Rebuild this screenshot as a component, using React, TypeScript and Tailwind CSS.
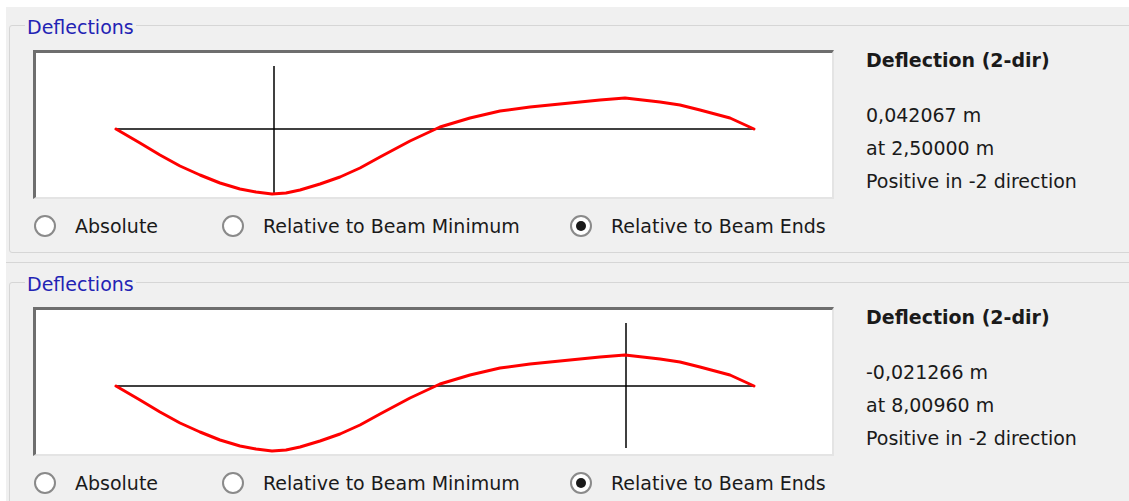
const font = { fontFamily: '"DejaVu Sans", Verdana, sans-serif' };

// deflected shape, in plot coordinates (px inside the sunken frame)
const curve =
  "80,76 104,90 124,102 144,113 164,122 184,130 204,136 220,139 236,141 250,140 264,137 284,131 304,124 324,115 344,104 374,88 404,74 434,65 464,58 494,54 524,51 564,47 589,45 624,49 644,52 664,57 694,65 718,76";

type Panel = {
  marker: number;
  markerTop: number;
  markerBottom: number;
  value: string;
  at: string;
};

const panels: Panel[] = [
  { marker: 238, markerTop: 13, markerBottom: 142, value: "0,042067 m", at: "at 2,50000 m" },
  { marker: 590, markerTop: 13, markerBottom: 138, value: "-0,021266 m", at: "at 8,00960 m" },
];

function Radio({ label, checked, width }: { label: string; checked?: boolean; width: string }) {
  return (
    <div className={`flex items-center gap-[19px] ${width}`}>
      <span className="flex h-[22px] w-[22px] items-center justify-center rounded-full border-2 border-[#8a8a8a] bg-white">
        {checked && <span className="h-[10px] w-[10px] rounded-full bg-[#1a1a1a]" />}
      </span>
      <span className="text-[19px] leading-[22px] text-[#1a1a1a]">{label}</span>
    </div>
  );
}

function DeflectionGroup({ p }: { p: Panel }) {
  return (
    <fieldset className="ml-[3px] w-[1140px] rounded-[3px] border border-[#d6d6d6] pb-[15px]">
      <legend className="ml-[15px] px-[2px] text-[19px] leading-[16px] text-[#2323b4]">
        <span className="relative top-[2px]">Deflections</span>
      </legend>
      <div className="mt-[17px] flex pl-[23px]">
        <div className="flex flex-col">
          <div className="h-[149px] w-[801px] border-t-[3px] border-l-[3px] border-r-2 border-b-2 border-t-[#6e6e6e] border-l-[#6e6e6e] border-r-[#e4e4e4] border-b-[#e4e4e4] bg-white">
            <svg width="796" height="144" viewBox="0 0 796 144" className="block">
              <line x1="80" y1="76" x2="718" y2="76" stroke="#000" strokeWidth="1.5" />
              <line
                x1={p.marker}
                y1={p.markerTop}
                x2={p.marker}
                y2={p.markerBottom}
                stroke="#000"
                strokeWidth="1.5"
              />
              <polyline
                points={curve}
                fill="none"
                stroke="#ff0000"
                strokeWidth="3"
                strokeLinejoin="round"
                strokeLinecap="round"
              />
            </svg>
          </div>
          <div className="mt-[16px] flex pl-[1px]">
            <Radio label="Absolute" width="w-[188px]" />
            <Radio label="Relative to Beam Minimum" width="w-[348px]" />
            <Radio label="Relative to Beam Ends" checked width="w-auto" />
          </div>
        </div>
        <div className="ml-[32px] mt-[-6px] text-[19px] leading-[33px] text-[#1a1a1a]">
          <div className="font-bold">Deflection (2-dir)</div>
          <div className="mt-[22px]">{p.value}</div>
          <div>{p.at}</div>
          <div>Positive in -2 direction</div>
        </div>
      </div>
    </fieldset>
  );
}

export default function App() {
  return (
    <div className="h-[501px] w-[1129px] overflow-hidden bg-white pl-[6px] pt-[7px]" style={font}>
      <div className="h-full bg-[#f0f0f0]">
        <div className="pt-[10px] pb-[9px]">
          <DeflectionGroup p={panels[0]} />
        </div>
        <div className="border-t border-[#d6d6d6] pt-[11px]">
          <DeflectionGroup p={panels[1]} />
        </div>
      </div>
    </div>
  );
}
